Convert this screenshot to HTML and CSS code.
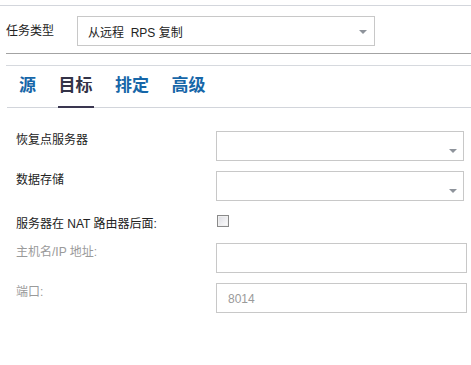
FILE: index.html
```html
<!DOCTYPE html>
<html lang="zh">
<head>
  <meta charset="UTF-8">
  <title>任务</title>
  <link rel="stylesheet" href="styles.css">
</head>
<body>
  <div class="top-line"></div>
  <div class="task-row">
    <div class="task-label">任务类型</div>
    <div class="select task-select">
      <span class="select-text">从远程&nbsp; RPS 复制</span>
      <span class="arrow"></span>
    </div>
  </div>
  <div class="sep-dark"></div>
  <div class="sep-light"></div>
  <div class="tabs">
    <div class="tab">源</div>
    <div class="tab active">目标</div>
    <div class="tab">排定</div>
    <div class="tab">高级</div>
  </div>
  <div class="form">
    <div class="label">恢复点服务器</div>
    <div class="select field"><span class="arrow"></span></div>

    <div class="label">数据存储</div>
    <div class="select field"><span class="arrow"></span></div>

    <div class="label nat">服务器在 NAT 路由器后面:</div>
    <div class="check-cell"><span class="checkbox"></span></div>

    <div class="label disabled">主机名/IP 地址:</div>
    <div class="input wide"></div>

    <div class="label disabled">端口:</div>
    <div class="input wide"><span class="input-text">8014</span></div>
  </div>
</body>
</html>
```

FILE: styles.css
```css
html, body {
  margin: 0;
  padding: 0;
  background: #fff;
  font-family: 'Liberation Sans', 'Noto Sans CJK SC', sans-serif;
  font-size: 12px;
  color: #222;
}
.top-line {
  margin-top: 5px;
  border-top: 1px solid #d3d6dc;
}
.task-row {
  display: flex;
  align-items: center;
  padding: 10px 0 0 6px;
}
.task-label {
  width: 71px;
  line-height: 16px;
  margin-top: -1px;
}
.select, .input {
  box-sizing: border-box;
  border: 1px solid #c8c8c8;
  background: #fff;
  height: 30px;
  display: flex;
  align-items: center;
  position: relative;
}
.task-select {
  width: 298px;
  padding-left: 10px;
}
.select-text {
  font-size: 12px;
  color: #222;
}
.arrow {
  position: absolute;
  right: 7px;
  top: 13px;
  width: 0;
  height: 0;
  border-left: 4px solid transparent;
  border-right: 4px solid transparent;
  border-top: 4px solid #8e939b;
}
.field .arrow {
  top: 17px;
  right: 6px;
}
.sep-dark {
  margin: 7px 0 0 6px;
  border-top: 1px solid #a3a3a3;
}
.sep-light {
  margin: 11px 0 0 6px;
  border-top: 1px solid #d6d9de;
}
.tabs {
  display: flex;
  gap: 22.5px;
  border-bottom: 1px solid #d2d5db;
  margin-left: 7px;
  padding-left: 12px;
  padding-top: 9px;
}
.tab {
  font-size: 17px;
  font-weight: bold;
  color: #1666a8;
  line-height: 22px;
  padding-bottom: 9px;
  border-bottom: 2px solid transparent;
  margin-bottom: -1px;
}
.tab.active {
  color: #333347;
  border-bottom-color: #3a3650;
  padding: 0 1px 9px;
  margin-left: -1px;
  margin-right: -1px;
}
.form {
  display: grid;
  grid-template-columns: 200px 248px;
  row-gap: 10px;
  padding: 23px 0 0 16px;
}
.label {
  line-height: 16px;
  padding-top: 1px;
}
.label.nat {
  padding-top: 5px;
}
.label.disabled {
  color: #9a9a9a;
}
.check-cell {
  height: 22px;
  padding-left: 1px;
  padding-top: 4px;
  box-sizing: border-box;
}
.checkbox {
  display: block;
  width: 12px;
  height: 12px;
  box-sizing: border-box;
  border: 1px solid #8a8a8a;
  background: linear-gradient(135deg, #dcdce2 0%, #f4f4f6 70%, #fff 100%);
  box-shadow: inset 0 0 0 1px #f0f0f0;
}
.input.wide {
  width: 251px;
  padding-left: 11px;
}
.input-text {
  color: #9a9a9a;
  font-size: 12px;
  margin-top: 2px;
}
```
